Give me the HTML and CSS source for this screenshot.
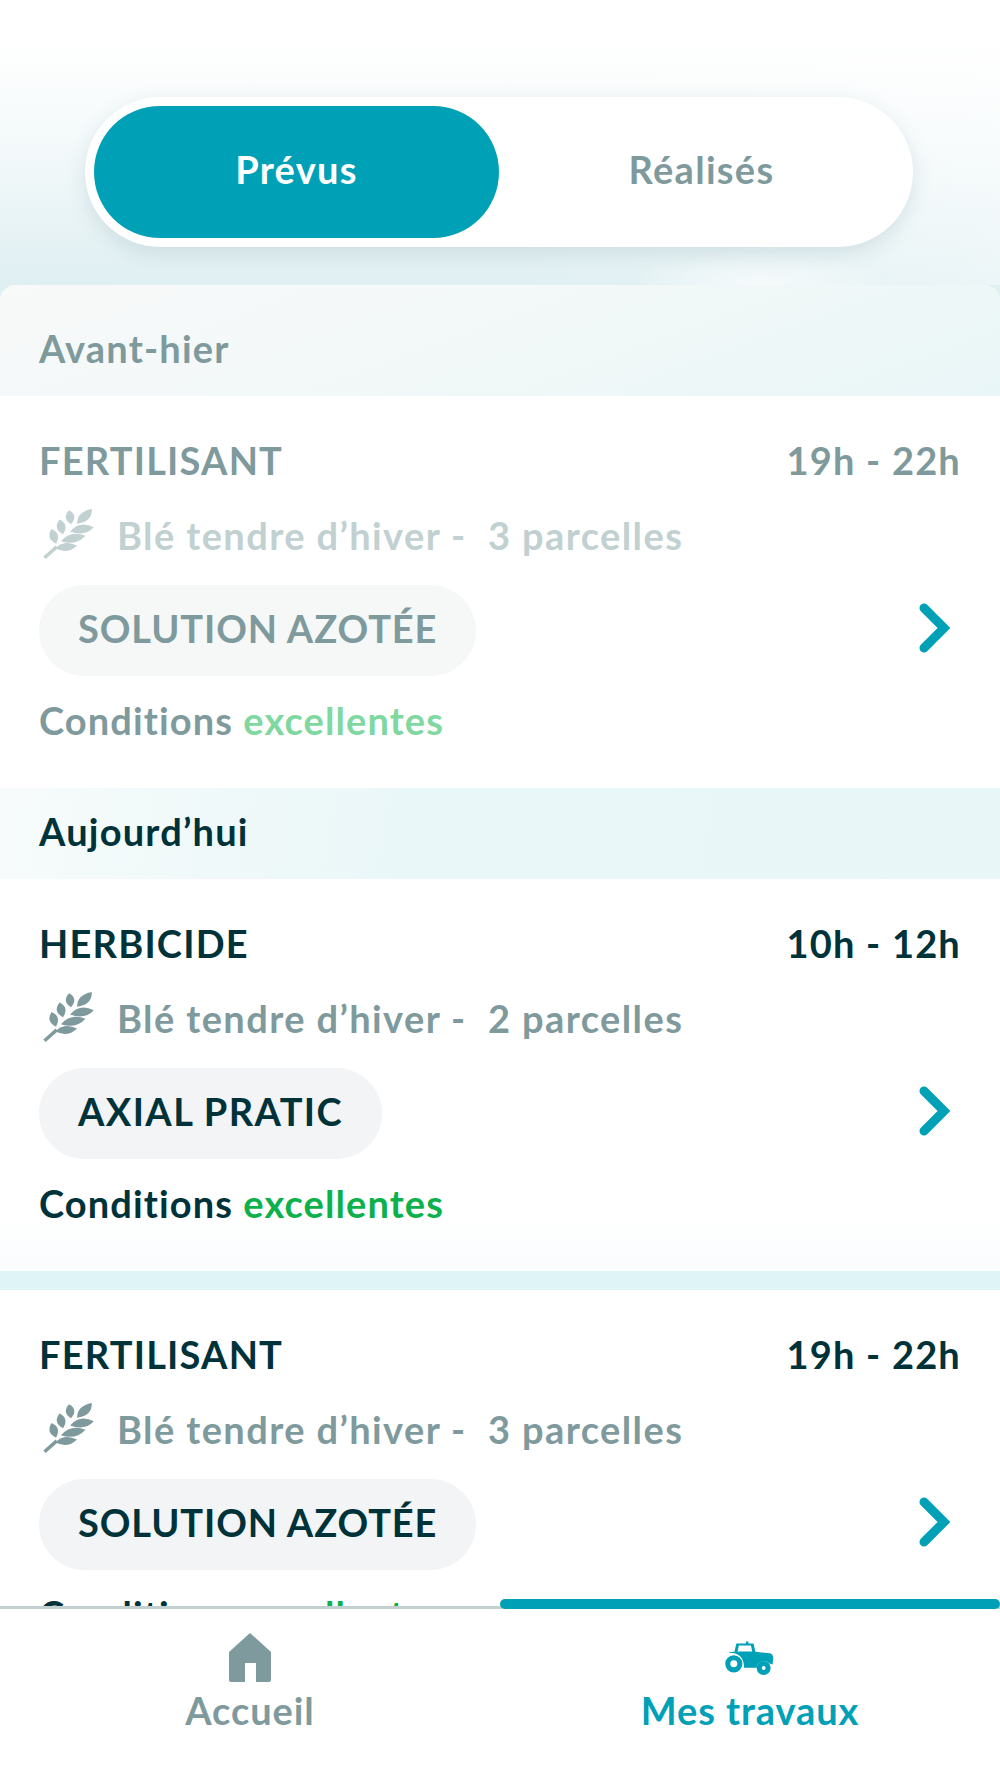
FILE: index.html
```html
<!DOCTYPE html>
<html lang="fr">
<head>
    <meta charset="UTF-8">
    <meta name="viewport" content="width=device-width, initial-scale=1.0">
    <title>Mes travaux</title>
    <link rel="stylesheet" href="styles.css">
</head>
<body>
    <svg class="sprites" width="0" height="0">
        <symbol id="wheat" viewBox="60 60 170 160">
            <path d="M75 205 L110 174" stroke="currentColor" stroke-width="10" fill="none"/>
            <path d="M106 178 Q132 152 168 170 Q140 197 106 178Z"/>
            <path d="M108 165 Q78 150 95 123 Q124 135 108 165Z"/>
            <path d="M122 158 Q150 126 192 142 Q165 172 122 158Z"/>
            <path d="M128 138 Q98 122 118 96 Q146 110 128 138Z"/>
            <path d="M148 130 Q175 98 216 118 Q190 146 148 130Z"/>
            <path d="M151 109 Q124 92 145 69 Q172 84 151 109Z"/>
            <path d="M168 108 Q168 74 210 66 Q212 102 168 108Z"/>
        </symbol>
        <symbol id="chevron" viewBox="0 0 32 50">
            <path d="M5 5 L25 25 L5 45" fill="none" stroke="currentColor" stroke-width="9" stroke-linecap="round" stroke-linejoin="miter"/>
        </symbol>
    </svg>

    <div class="page">
        <div class="top">
            <div class="toggle">
                <div class="toggle-item active">Prévus</div>
                <div class="toggle-item">Réalisés</div>
            </div>
        </div>

        <div class="sheet">
            <div class="day day-first past">Avant-hier</div>
            <div class="job past">
                <div class="job-head">
                    <span>FERTILISANT</span>
                    <span>19h - 22h</span>
                </div>
                <div class="job-crop">
                    <svg class="wheat"><use href="#wheat"/></svg>
                    <span>Blé tendre d’hiver - &nbsp;3 parcelles</span>
                </div>
                <div class="job-row">
                    <div class="chip">SOLUTION AZOTÉE</div>
                    <svg class="chevron"><use href="#chevron"/></svg>
                </div>
                <div class="job-cond">Conditions <span class="good">excellentes</span></div>
            </div>

            <div class="day">Aujourd’hui</div>
            <div class="job job-fade">
                <div class="job-head">
                    <span>HERBICIDE</span>
                    <span>10h - 12h</span>
                </div>
                <div class="job-crop">
                    <svg class="wheat"><use href="#wheat"/></svg>
                    <span>Blé tendre d’hiver - &nbsp;2 parcelles</span>
                </div>
                <div class="job-row">
                    <div class="chip chip-short">AXIAL PRATIC</div>
                    <svg class="chevron"><use href="#chevron"/></svg>
                </div>
                <div class="job-cond">Conditions <span class="good">excellentes</span></div>
            </div>
            <div class="band"></div>
            <div class="job">
                <div class="job-head">
                    <span>FERTILISANT</span>
                    <span>19h - 22h</span>
                </div>
                <div class="job-crop">
                    <svg class="wheat"><use href="#wheat"/></svg>
                    <span>Blé tendre d’hiver - &nbsp;3 parcelles</span>
                </div>
                <div class="job-row">
                    <div class="chip">SOLUTION AZOTÉE</div>
                    <svg class="chevron"><use href="#chevron"/></svg>
                </div>
                <div class="job-cond">Conditions <span class="good">excellentes</span></div>
            </div>
        </div>

        <div class="nav">
            <div class="nav-marker"></div>
            <div class="nav-item">
                <svg class="nav-icon" viewBox="0 0 42 49">
                    <path fill-rule="evenodd" d="M21 0 L42 19 V47 Q42 49 40 49 H27 V30 H16 V49 H2 Q0 49 0 47 V19Z"/>
                </svg>
                <span>Accueil</span>
            </div>
            <div class="nav-item nav-active">
                <svg class="nav-icon" viewBox="70 55 170 110">
                    <path d="M112 66 H142 V60 H150 V66 H166 L172 92 L218 97 Q228 100 228 112 L226 132 L218 130 Q200 112 180 130 L176 142 H136 Q136 100 100 96 H88 Q92 92 106 92Z"/>
                    <path class="tractor-glass" d="M120 72 H158 L162 91 H116Z"/>
                    <circle class="tractor-wheel" cx="104" cy="130" r="19"/>
                    <circle class="tractor-wheel" cx="198" cy="143" r="14"/>
                </svg>
                <span>Mes travaux</span>
            </div>
        </div>
    </div>
</body>
</html>
```

FILE: styles.css
```css
* {
    box-sizing: border-box;
}

body {
    margin: 0;
    padding: 0;
    font-family: 'Lato', 'Noto Sans', sans-serif;
    font-weight: 700;
    color: #00323a;
    background: white;
}

.sprites {
    position: absolute;
}

.page {
    width: 1000px;
    height: 1778px;
    display: flex;
    flex-direction: column;
    overflow: hidden;
    background: linear-gradient(180deg, #ffffff 40px, #f3f9fa 150px, #dfeff2 285px);
}

.top {
    height: 285px;
    flex-shrink: 0;
    padding: 97px 87px 0 85px;
    background:
        radial-gradient(ellipse 130px 34px at 760px 285px, rgba(255, 255, 255, 0.65), transparent),
        linear-gradient(90deg, transparent 50%, rgba(255, 255, 255, 0.4));
}

.toggle {
    height: 150px;
    padding: 9px;
    display: flex;
    background: white;
    border-radius: 75px;
    box-shadow: 0 6px 20px rgba(50, 100, 115, 0.14);
}

.toggle-item {
    flex: 1;
    display: flex;
    align-items: center;
    justify-content: center;
    padding-bottom: 6px;
    font-size: 38px;
    letter-spacing: 1.3px;
    color: #7f9a9d;
    border-radius: 66px;
}

.toggle-item.active {
    background: #00a0b6;
    color: white;
}

.sheet {
    flex: 1;
    min-height: 0;
    overflow: hidden;
    background: white;
    border-radius: 16px 16px 0 0;
}

.day {
    height: 91px;
    padding: 0 39px 6px;
    display: flex;
    align-items: center;
    font-size: 38px;
    letter-spacing: 1.2px;
    background: linear-gradient(100deg, #f7fbfb, #eaf7f8 40%, #e8f6f8);
}

.day-first {
    height: 111px;
    padding-top: 20px;
    background: linear-gradient(160deg, #f8f9f9, #f2f8f8 50%, #e9f6f7);
}

.job {
    height: 392px;
    padding: 42px 39px 0 39px;
    background: white;
}

.job-fade {
    background: linear-gradient(180deg, #ffffff 85%, #fafcfd);
}

.job-head {
    display: flex;
    justify-content: space-between;
    height: 44px;
    line-height: 44px;
    font-size: 38px;
    letter-spacing: 1.2px;
}

.job-crop {
    margin-top: 31px;
    height: 44px;
    display: flex;
    align-items: center;
    gap: 18px;
    font-size: 38px;
    letter-spacing: 1.4px;
    color: #7f9a9d;
}

.wheat {
    width: 60px;
    height: 56px;
    fill: #7f9a9d;
    color: #7f9a9d;
    flex-shrink: 0;
}

.job-row {
    margin-top: 28px;
    display: flex;
    align-items: center;
    justify-content: space-between;
    padding-right: 10px;
}

.chip {
    height: 91px;
    padding: 0 39px 6px;
    display: flex;
    align-items: center;
    font-size: 38px;
    letter-spacing: 0.9px;
    background: #f2f4f6;
    border-radius: 46px;
}

.chip-short {
    letter-spacing: 1.4px;
}

.chevron {
    width: 32px;
    height: 50px;
    margin-bottom: 5px;
    color: #00a0b6;
}

.job-cond {
    margin-top: 22px;
    height: 44px;
    line-height: 44px;
    font-size: 38px;
    letter-spacing: 1.1px;
}

.good {
    color: #0db14b;
}

.band {
    height: 19px;
    background: #dff4f7;
}

.past .good {
    color: #7fd8a0;
}

.day.past,
.past .job-head,
.past .chip,
.past .job-cond {
    color: #7f9a9d;
}

.past .job-crop {
    color: #c1d0d1;
}

.past .wheat {
    fill: #c1d0d1;
    color: #c1d0d1;
}

.past .chip {
    background: #f6f8f8;
}

.nav {
    position: relative;
    height: 172px;
    flex-shrink: 0;
    display: flex;
    background: white;
    border-top: 3px solid #c2d0d2;
}

.nav-marker {
    position: absolute;
    top: -10px;
    left: 500px;
    width: 500px;
    height: 10px;
    background: #00a0b6;
    border-radius: 5px;
}

.nav-item {
    flex: 1;
    height: 130px;
    padding-top: 24px;
    display: flex;
    flex-direction: column;
    align-items: center;
    font-size: 38px;
    letter-spacing: 0.9px;
    color: #7f9a9d;
    fill: #7f9a9d;
}

.nav-icon {
    width: 54px;
    height: 49px;
    margin-bottom: 6px;
}

.nav-item span {
    line-height: 44px;
}

.nav-active {
    color: #00a0b6;
    fill: #00a0b6;
}

.tractor-glass {
    fill: white;
}

.tractor-wheel {
    fill: white;
    stroke: #00a0b6;
    stroke-width: 16;
}
```
